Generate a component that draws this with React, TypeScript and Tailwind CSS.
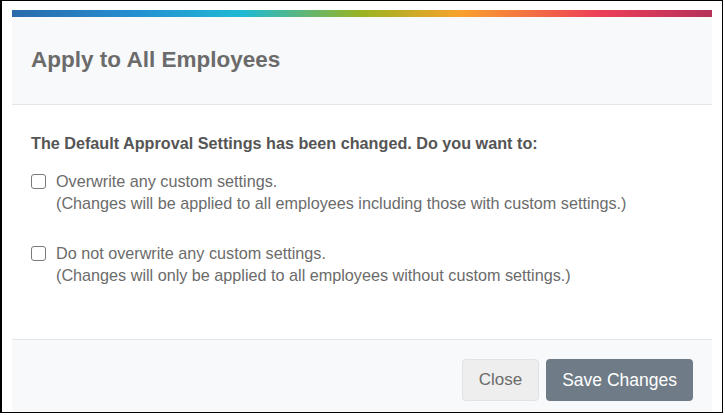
import React from 'react'

const options = [
  {
    title: 'Overwrite any custom settings.',
    note: '(Changes will be applied to all employees including those with custom settings.)',
  },
  {
    title: 'Do not overwrite any custom settings.',
    note: '(Changes will only be applied to all employees without custom settings.)',
  },
]

export default function App() {
  return (
    <div className="w-[725px] h-[415px] bg-white font-['Liberation_Sans',Arial,sans-serif]">
      <div className="w-[723px] h-[413px] border border-l-2 border-black pl-[10px] pt-[9px]">
        <div className="w-[700px] h-[402px] flex flex-col bg-white">
          <div className="h-[7px] shrink-0 bg-[linear-gradient(to_right,#2a6aab_0%,#2490d2_18%,#1fbad4_33%,#9ab321_50%,#f9a22d_64%,#ed3e58_84%,#b5325a_100%)]" />

          <div className="h-[88px] shrink-0 bg-[#f8f9fa] border-b border-[#e3e5e8] px-[19px] flex items-center">
            <h1 className="text-[22.5px] font-bold text-[#6b6b6b] pb-[1px]">Apply to All Employees</h1>
          </div>

          <div className="flex-1 px-[19px] pt-[28px]">
            <p className="text-[16.2px] font-bold text-[#555] leading-[20px]">
              The Default Approval Settings has been changed. Do you want to:
            </p>
            <div className="mt-[17px] flex flex-col gap-[28px]">
              {options.map((o) => (
                <label key={o.title} className="flex items-start gap-[10px] text-[16.2px] leading-[22px] text-[#6b6b6b]">
                  <span className="mt-[4px] w-[15px] h-[15px] shrink-0 rounded-[3px] border-[1.5px] border-[#7a7a7a] bg-white" />
                  <span>
                    {o.title}
                    <br />
                    {o.note}
                  </span>
                </label>
              ))}
            </div>
          </div>

          <div className="h-[73px] shrink-0 bg-[#f8f9fa] border-t border-[#e3e5e8] px-[19px] pt-[19px] flex justify-end items-start gap-[7px]">
            <button className="h-[42px] px-[16px] rounded-[4px] border border-[#e2e2e2] bg-[#eeeeee] text-[17px] text-[#6b6b6b]">
              Close
            </button>
            <button className="h-[42px] px-[16px] rounded-[4px] bg-[#6f7c87] text-[17.5px] text-white">
              Save Changes
            </button>
          </div>
        </div>
      </div>
    </div>
  )
}
